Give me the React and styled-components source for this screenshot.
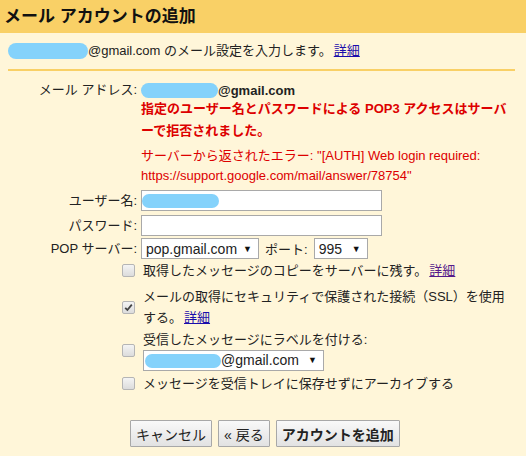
import React from 'react'
import styled, { createGlobalStyle } from 'styled-components'

const GlobalStyle = createGlobalStyle`
  html, body {
    margin: 0;
    padding: 0;
    background: #fff6d9;
  }
  body {
    font-family: "Liberation Sans", Arial, "Noto Sans CJK JP", sans-serif;
    font-size: 13px;
    color: #222;
  }
`

const Page = styled.div`
  width: 526px;
  height: 456px;
  background: #fff6d9;
  overflow: hidden;
`

const Header = styled.div`
  height: 33px;
  background: #f9d066;
  padding-left: 4px;
  font-size: 17px;
  font-weight: bold;
  line-height: 34px;
  color: #111;
`

const Intro = styled.div`
  margin: 0 11px 0 8px;
  padding: 9px 0 10px;
  border-bottom: 2px solid #f9d066;
  line-height: 17px;
  font-size: 13px;
  display: flex;
  align-items: center;
`

const Blur = styled.span`
  display: inline-block;
  width: ${p => p.$w}px;
  height: ${p => p.$h || 15}px;
  background: #84d2fb;
  border-radius: 8px;
  filter: blur(0.6px);
  flex-shrink: 0;
`

const Link = styled.a`
  color: ${p => (p.$visited ? '#551a8b' : '#1a0dab')};
  text-decoration: underline;
  margin-left: 2px;
`

const Form = styled.div`
  display: grid;
  grid-template-columns: 137px 1fr;
  column-gap: 4px;
  padding-top: 9px;
`

const Label = styled.div`
  text-align: right;
  line-height: 20px;
  height: ${p => p.$h || 20}px;
  display: flex;
  align-items: center;
  justify-content: flex-end;
  margin-top: ${p => p.$mt || 0}px;
`

const Field = styled.div`
  display: flex;
  align-items: center;
  gap: 6px;
  min-height: 20px;
  margin-top: ${p => p.$mt || 0}px;
`

const Value = styled.div`
  display: flex;
  align-items: center;
  font-weight: bold;
`

const ErrorBlock = styled.div`
  grid-column: 2;
  color: #dd0000;
  font-weight: ${p => (p.$bold ? 'bold' : 'normal')};
  line-height: ${p => (p.$bold ? 22 : 20)}px;
  font-size: 13px;
  margin-top: ${p => p.$mt || 0}px;
  padding-right: 8px;
`

const TextInput = styled.div`
  width: 239px;
  height: 19px;
  border: 1px solid #a9a9a9;
  background: #fff;
  display: flex;
  align-items: center;
`

const Select = styled.div`
  width: ${p => p.$w}px;
  height: 19px;
  border: 1px solid #a9a9a9;
  background: #fff;
  display: flex;
  align-items: center;
  justify-content: space-between;
  padding: 0 6px 0 ${p => p.$pl ?? 4}px;
  font-size: 14px;
  box-sizing: content-box;
  &::after {
    content: '▼';
    font-size: 9px;
    color: #111;
  }
`

const Options = styled.div`
  grid-column: 2;
  margin-left: -19px;
  margin-top: 1px;
  display: flex;
  flex-direction: column;
`

const OptionRow = styled.div`
  display: flex;
  align-items: center;
  gap: 8px;
  margin-top: ${p => p.$mt || 0}px;
  line-height: 21px;
`

const Box = styled.span`
  width: 11px;
  height: 11px;
  border: 1px solid #b5b5b5;
  border-radius: 2px;
  background: linear-gradient(#f4f4f4, #dcdcdc);
  display: flex;
  align-items: center;
  justify-content: center;
  flex-shrink: 0;
`

const OptionText = styled.div`
  display: flex;
  flex-direction: column;
`

const Buttons = styled.div`
  display: flex;
  gap: 6px;
  padding-left: 130px;
  margin-top: 26px;
`

const Button = styled.button`
  height: 27px;
  padding: 0 5px;
  border: 1px solid #a8a8a8;
  border-radius: 1px;
  background: linear-gradient(#f9f9f9, #e2e2e2);
  font-family: inherit;
  font-size: 14px;
  color: #222;
  font-weight: ${p => (p.$bold ? 'bold' : 'normal')};
`

const Check = ({ checked }) => (
  <Box>
    {checked && (
      <svg width="9" height="9" viewBox="0 0 9 9">
        <path d="M1.2 4.8 L3.4 7 L7.8 1.6" fill="none" stroke="#444" strokeWidth="1.8" />
      </svg>
    )}
  </Box>
)

export default function App() {
  return (
    <Page>
      <GlobalStyle />
      <Header>メール アカウントの追加</Header>
      <Intro>
        <Blur $w={80} $h={16} />
        <span>@gmail.com のメール設定を入力します。</span>
        <Link href="#">詳細</Link>
      </Intro>
      <Form>
        <Label>メール アドレス:</Label>
        <Field>
          <Value>
            <Blur $w={77} $h={15} />
            @gmail.com
          </Value>
        </Field>
        <ErrorBlock $bold $mt={-2}>
          指定のユーザー名とパスワードによる POP3 アクセスはサーバーで拒否されました。
        </ErrorBlock>
        <ErrorBlock $mt={4}>
          サーバーから返されたエラー: "[AUTH] Web login required: https://support.google.com/mail/answer/78754"
        </ErrorBlock>
        <Label $h={21} $mt={4}>ユーザー名:</Label>
        <Field $mt={4}>
          <TextInput>
            <Blur $w={77} $h={14} />
          </TextInput>
        </Field>
        <Label $h={21} $mt={4}>パスワード:</Label>
        <Field $mt={4}>
          <TextInput />
        </Field>
        <Label $h={21} $mt={2}>POP サーバー:</Label>
        <Field $mt={2}>
          <Select $w={106}>pop.gmail.com</Select>
          <span>ポート:</span>
          <Select $w={42}>995</Select>
        </Field>
        <Options>
          <OptionRow>
            <Check />
            <span>
              取得したメッセージのコピーをサーバーに残す。<Link href="#" $visited>詳細</Link>
            </span>
          </OptionRow>
          <OptionRow $mt={5}>
            <Check checked />
            <OptionText>
              <span>メールの取得にセキュリティで保護された接続（SSL）を使用</span>
              <span>
                する。<Link href="#">詳細</Link>
              </span>
            </OptionText>
          </OptionRow>
          <OptionRow $mt={1}>
            <Check />
            <OptionText>
              <span>受信したメッセージにラベルを付ける:</span>
              <Select $w={172} $pl={1}>
                <Value style={{ fontWeight: 'normal' }}>
                  <Blur $w={76} $h={14} />
                  @gmail.com
                </Value>
              </Select>
            </OptionText>
          </OptionRow>
          <OptionRow $mt={2}>
            <Check />
            <span>メッセージを受信トレイに保存せずにアーカイブする</span>
          </OptionRow>
        </Options>
      </Form>
      <Buttons>
        <Button>キャンセル</Button>
        <Button>« 戻る</Button>
        <Button $bold>アカウントを追加</Button>
      </Buttons>
    </Page>
  )
}
